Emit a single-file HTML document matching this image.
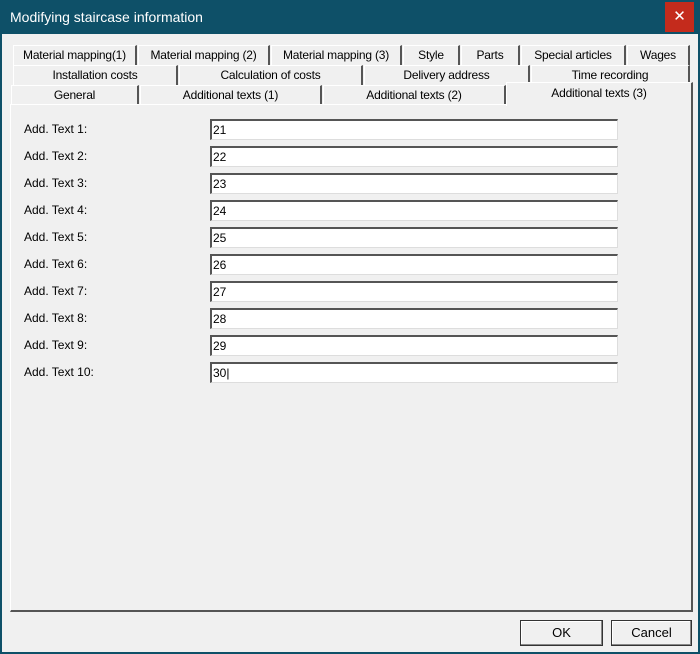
<!DOCTYPE html>
<html><head><style>
*{margin:0;padding:0;box-sizing:border-box}
body{width:700px;height:654px;background:#0e5068;position:relative;overflow:hidden;font-family:"Liberation Sans",sans-serif;font-size:12px;color:#000}
.win{position:absolute;left:2px;top:34px;width:696px;height:618px;background:#f0f0f0}
.title{position:absolute;left:10px;top:9px;color:#fff;font-size:14px}
.close{position:absolute;left:665px;top:2px;width:29px;height:30px;background:#c42b1c;color:#fff;font-size:15px;text-align:center;line-height:30px}
.t{position:absolute;height:20px;text-align:center;line-height:19px;background:#f0f0f0;border-top:1px solid #fff;border-left:1px solid #fff;border-right:2px solid #555;white-space:nowrap;letter-spacing:-0.2px}
.panel{position:absolute;left:10px;top:104px;width:683px;height:508px;border-left:1px solid #fff;border-top:1px solid #fff;border-right:2px solid #555;border-bottom:2px solid #555;background:#f0f0f0}
.lbl{position:absolute;left:24px}
.in{position:absolute;left:210px;width:408px;height:21px;background:#fff;border-top:2px solid #555;border-left:2px solid #555;border-right:1px solid #ddd;border-bottom:1px solid #ddd;padding-left:1px;line-height:19px}
.btn{position:absolute;top:620px;height:26px;border:1px solid #333;box-shadow:inset -1px -1px #888,inset 1px 1px #fff;background:#f0f0f0;text-align:center;line-height:24px;font-size:13px}
</style></head><body>
<div class="title">Modifying staircase information</div>
<div class="close">✕</div>
<div class="win"></div>
<div class="t" style="left:13px;top:45px;width:124px">Material mapping(1)</div>
<div class="t" style="left:138px;top:45px;width:132px">Material mapping (2)</div>
<div class="t" style="left:271px;top:45px;width:131px">Material mapping (3)</div>
<div class="t" style="left:403px;top:45px;width:57px">Style</div>
<div class="t" style="left:461px;top:45px;width:59px">Parts</div>
<div class="t" style="left:521px;top:45px;width:105px">Special articles</div>
<div class="t" style="left:627px;top:45px;width:63px">Wages</div>
<div class="t" style="left:13px;top:65px;width:165px">Installation costs</div>
<div class="t" style="left:179px;top:65px;width:184px">Calculation of costs</div>
<div class="t" style="left:364px;top:65px;width:166px">Delivery address</div>
<div class="t" style="left:531px;top:65px;width:159px">Time recording</div>
<div class="t" style="left:11px;top:85px;width:128px">General</div>
<div class="t" style="left:140px;top:85px;width:182px">Additional texts (1)</div>
<div class="t" style="left:323px;top:85px;width:183px">Additional texts (2)</div>
<div class="panel"></div>
<div class="t" style="left:506px;top:82px;width:187px;height:24px;border-bottom:none;line-height:20px;z-index:2">Additional texts (3)</div>
<div class="lbl" style="top:122px">Add. Text 1:</div><div class="in" style="top:119px">21</div>
<div class="lbl" style="top:149px">Add. Text 2:</div><div class="in" style="top:146px">22</div>
<div class="lbl" style="top:176px">Add. Text 3:</div><div class="in" style="top:173px">23</div>
<div class="lbl" style="top:203px">Add. Text 4:</div><div class="in" style="top:200px">24</div>
<div class="lbl" style="top:230px">Add. Text 5:</div><div class="in" style="top:227px">25</div>
<div class="lbl" style="top:257px">Add. Text 6:</div><div class="in" style="top:254px">26</div>
<div class="lbl" style="top:284px">Add. Text 7:</div><div class="in" style="top:281px">27</div>
<div class="lbl" style="top:311px">Add. Text 8:</div><div class="in" style="top:308px">28</div>
<div class="lbl" style="top:338px">Add. Text 9:</div><div class="in" style="top:335px">29</div>
<div class="lbl" style="top:365px">Add. Text 10:</div><div class="in" style="top:362px">30|</div>
<div class="btn" style="left:520px;width:83px">OK</div>
<div class="btn" style="left:611px;width:81px">Cancel</div>
</body></html>
